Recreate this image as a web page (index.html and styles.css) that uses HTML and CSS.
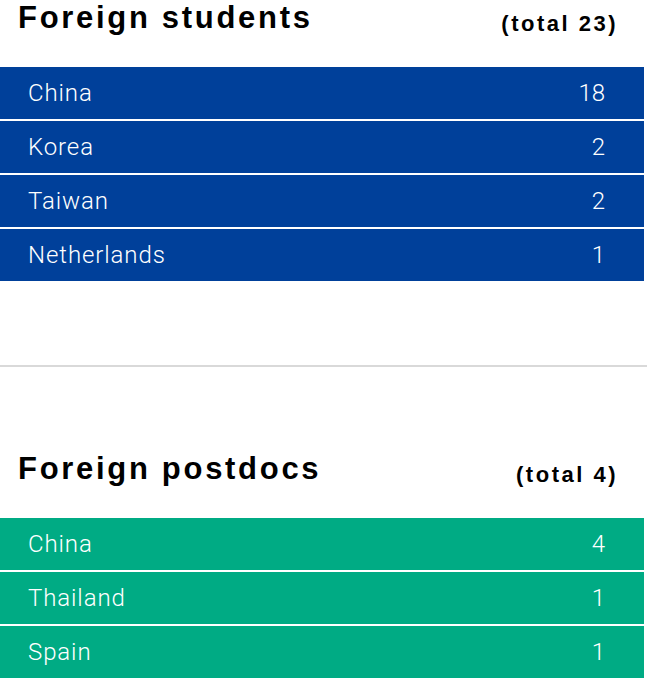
FILE: index.html
```html
<!DOCTYPE html>
<html lang="en">
<head>
<meta charset="utf-8">
<title>Foreign students and postdocs</title>
<link rel="stylesheet" href="styles.css">
</head>
<body>
<main class="page">
  <section class="group group--students">
    <header class="group-head">
      <h2 class="group-title">Foreign students</h2>
      <span class="group-total">(total 23)</span>
    </header>
    <ul class="list list--blue">
      <li class="row"><span class="row-name">China</span><span class="row-count">18</span></li>
      <li class="row"><span class="row-name">Korea</span><span class="row-count">2</span></li>
      <li class="row"><span class="row-name">Taiwan</span><span class="row-count">2</span></li>
      <li class="row"><span class="row-name">Netherlands</span><span class="row-count">1</span></li>
    </ul>
  </section>
  <section class="group group--postdocs">
    <header class="group-head">
      <h2 class="group-title">Foreign postdocs</h2>
      <span class="group-total">(total 4)</span>
    </header>
    <ul class="list list--green">
      <li class="row"><span class="row-name">China</span><span class="row-count">4</span></li>
      <li class="row"><span class="row-name">Thailand</span><span class="row-count">1</span></li>
      <li class="row"><span class="row-name">Spain</span><span class="row-count">1</span></li>
    </ul>
  </section>
</main>
</body>
</html>
```
FILE: styles.css
```css
html, body {
  margin: 0;
  padding: 0;
  background: #ffffff;
}

body {
  font-family: "Liberation Sans", Arial, sans-serif;
  color: #000000;
}

.page {
  display: flex;
  flex-direction: column;
}

.group--students {
  padding-bottom: 84px;
  border-bottom: 2px solid #d9d9d9;
}

.group--postdocs {
  padding-top: 84px;
}

.group-head {
  display: flex;
  justify-content: space-between;
  align-items: flex-start;
  width: 644px;
  height: 34px;
  margin-bottom: 33px;
}

.group-title {
  margin: 0 0 0 18px;
  font-family: "Liberation Sans", Arial, sans-serif;
  font-weight: 700;
  font-size: 31px;
  line-height: 35px;
  letter-spacing: 2.7px;
}

.group-total {
  margin-top: 12px;
  margin-right: 26px;
  font-family: "Liberation Sans", Arial, sans-serif;
  font-weight: 700;
  font-size: 22px;
  line-height: 24px;
  letter-spacing: 2.5px;
}

.list {
  list-style: none;
  margin: 0;
  padding: 0;
  width: 644px;
  display: flex;
  flex-direction: column;
  gap: 2px;
}

.row {
  display: flex;
  justify-content: space-between;
  align-items: center;
  height: 52px;
  padding: 0 39px 0 28px;
  color: #ffffff;
  font-family: Roboto, "Liberation Sans", sans-serif;
  font-weight: 300;
  font-size: 24px;
  letter-spacing: 0.9px;
}

.row-count {
  letter-spacing: 0;
}

.list--blue .row {
  background: #00409a;
}

.list--green .row {
  background: #00ab84;
}
```
